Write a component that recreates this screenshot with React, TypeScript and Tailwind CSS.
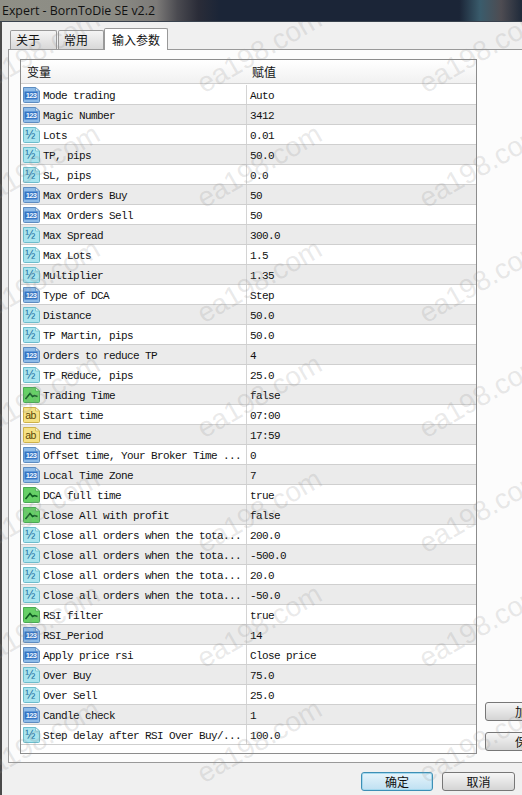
import React from "react";

type Kind = "n" | "d" | "b" | "s";
const rows: [Kind, string, string][] = [
  ["n", "Mode trading", "Auto"],
  ["n", "Magic Number", "3412"],
  ["d", "Lots", "0.01"],
  ["d", "TP, pips", "50.0"],
  ["d", "SL, pips", "0.0"],
  ["n", "Max Orders Buy", "50"],
  ["n", "Max Orders Sell", "50"],
  ["d", "Max Spread", "300.0"],
  ["d", "Max Lots", "1.5"],
  ["d", "Multiplier", "1.35"],
  ["n", "Type of DCA", "Step"],
  ["d", "Distance", "50.0"],
  ["d", "TP Martin, pips", "50.0"],
  ["n", "Orders to reduce TP", "4"],
  ["d", "TP Reduce, pips", "25.0"],
  ["b", "Trading Time", "false"],
  ["s", "Start time", "07:00"],
  ["s", "End time", "17:59"],
  ["n", "Offset time, Your Broker Time ...", "0"],
  ["n", "Local Time Zone", "7"],
  ["b", "DCA full time", "true"],
  ["b", "Close All with profit", "false"],
  ["d", "Close all orders when the tota...", "200.0"],
  ["d", "Close all orders when the tota...", "-500.0"],
  ["d", "Close all orders when the tota...", "20.0"],
  ["d", "Close all orders when the tota...", "-50.0"],
  ["b", "RSI filter", "true"],
  ["n", "RSI_Period", "14"],
  ["n", "Apply price rsi", "Close price"],
  ["d", "Over Buy", "75.0"],
  ["d", "Over Sell", "25.0"],
  ["n", "Candle check", "1"],
  ["d", "Step delay after RSI Over Buy/...", "100.0"],
];

const palette: Record<Kind, { fill: string; edge: string; ear: string }> = {
  n: { fill: "#8dbbe8", edge: "#5c8cc0", ear: "#dcebf9" },
  d: { fill: "#a8e4ee", edge: "#6cbccc", ear: "#e6f8fb" },
  b: { fill: "#66d066", edge: "#4aa855", ear: "#d3f2d3" },
  s: { fill: "#f5e184", edge: "#cdb24a", ear: "#fcf5cf" },
};

function TypeIcon({ kind }: { kind: Kind }) {
  const c = palette[kind];
  return (
    <svg width="17" height="17" viewBox="0 0 17 17" className="shrink-0">
      <path d="M0.5 1.5h12l4 3.5v10.5a1 1 0 0 1-1 1h-14a1 1 0 0 1-1-1z" fill={c.fill} stroke={c.edge} />
      <path d="M12.5 1.5v3.5h4z" fill={c.ear} stroke={c.edge} strokeWidth="0.7" />
      {kind === "n" && (
        <>
          <rect x="1.5" y="5.5" width="13" height="8" fill="#3474c4" />
          <text x="8" y="12.2" textAnchor="middle" fontSize="7.5" fontWeight="700" fill="#eef6ff" fontFamily="Liberation Sans, sans-serif">123</text>
        </>
      )}
      {kind === "d" && (
        <text x="7" y="13" textAnchor="middle" fontSize="12" fill="#1c6ea0" fontFamily="Liberation Sans, sans-serif">½</text>
      )}
      {kind === "b" && <path d="M2.5 13l4.5-5.5 2.5 3 2-1 3 1" fill="none" stroke="#0d5a20" strokeWidth="1.5" />}
      {kind === "s" && (
        <text x="7.5" y="13" textAnchor="middle" fontSize="10.5" fill="#5c4a0a" fontFamily="Liberation Sans, sans-serif">ab</text>
      )}
    </svg>
  );
}

const marks: { x: number; y: number }[] = [];
for (let col = 0; col < 3; col++) {
  for (let r = 0; r < 8; r++) {
    marks.push({ x: -32 + col * 222, y: -100 + r * 115 });
  }
}

const cjk = { fontFamily: '"Noto Sans CJK SC", sans-serif' };

function Btn({ children, className }: { children: React.ReactNode; className: string }) {
  return (
    <div
      className={`flex items-center justify-center rounded-[3px] border text-[12px] text-[#111] ${className}`}
      style={cjk}
    >
      {children}
    </div>
  );
}

export default function App() {
  return (
    <div className="relative h-[795px] w-[522px] overflow-hidden bg-[#f0f0f0] flex flex-col">
      <div className="h-[21px] shrink-0 bg-[linear-gradient(90deg,#8f8f86_0%,#8b8b84_22%,#7c7a78_30%,#4a4a50_34%,#2a2c38_38%,#1b2537_42%,#1b2537_88%,#3a5c6c_92%,#4e4c52_96%,#1f2a3a_100%)] pl-[2px] pt-[1px] text-[12.4px] leading-[19px] text-[#111] [font-family:'Open_Sans',sans-serif]">
        Expert - BornToDie SE v2.2
      </div>
      <div className="h-[1px] shrink-0 bg-[#39424e]" />
      <div className="flex min-h-0 flex-1 flex-col border-l-[2px] border-l-[#4a4a4a] bg-[#f0f0f0] pl-[6px]">
        <div className="flex h-[27px] shrink-0 items-end pl-[2px]" style={cjk}>
          <div className="flex h-[19px] w-[47px] items-center rounded-t-[2px] border border-b-0 border-[#999] bg-[linear-gradient(#f4f4f4,#d8d8d8)] pl-[5px] text-[12px] text-[#111]">关于</div>
          <div className="ml-[1px] flex h-[19px] w-[46px] items-center rounded-t-[2px] border border-b-0 border-[#999] bg-[linear-gradient(#f4f4f4,#d8d8d8)] pl-[5px] text-[12px] text-[#111]">常用</div>
          <div className="relative z-10 -mb-[1px] flex h-[22px] w-[64px] items-center justify-center rounded-t-[2px] border border-b-0 border-[#999] bg-white text-[12px] text-[#111]">输入参数</div>
        </div>
        <div className="h-[714px] shrink-0 border-t border-b border-l border-[#999] bg-[#fcfcfc] pl-[11px] pt-[9px]">
          <div className="h-[695px] w-[457px] border border-[#8c8c8c] bg-white">
            <div className="mb-[1px] flex h-[24px] border-b border-[#d0d0d0] bg-[linear-gradient(#ffffff,#f1f1f1)] text-[12px] text-[#111]" style={cjk}>
              <div className="flex w-[226px] items-center border-r border-transparent pl-[6px]">变量</div>
              <div className="flex items-center pl-[5px]">赋值</div>
            </div>
            {rows.map(([kind, name, value], i) => (
              <div
                key={i}
                className={`flex h-[20px] items-center border-b border-[#cfcfcf] text-[11px] tracking-[-0.6px] text-[#111] [font-family:'Liberation_Mono',monospace] ${i % 2 ? "bg-[#ebebeb]" : "bg-white"}`}
              >
                <div className="flex h-full w-[226px] shrink-0 items-center border-r border-[#d4d4d4] pl-[2px]">
                  <TypeIcon kind={kind} />
                  <span className="ml-[3px] whitespace-pre pt-[3px]">{name}</span>
                </div>
                <span className="pl-[3px] whitespace-pre pt-[3px]">{value}</span>
              </div>
            ))}
          </div>
        </div>
        <div className="relative flex-1">
          <div className="absolute right-[7px] top-[9px] flex gap-[9px]">
            <Btn className="h-[19px] w-[72px] border-[#3d8fb5] bg-[linear-gradient(#e6f4fb,#bfe0f2)] shadow-[inset_0_0_0_1px_#a4d8ee]">确定</Btn>
            <Btn className="h-[19px] w-[73px] border-[#777] bg-[linear-gradient(#f6f6f6,#d4d4d4)]">取消</Btn>
          </div>
        </div>
      </div>
      <Btn className="absolute left-[485px] top-[702px] h-[19px] w-[84px] border-[#777] bg-[linear-gradient(#f6f6f6,#d4d4d4)]">加载</Btn>
      <Btn className="absolute left-[485px] top-[732px] h-[19px] w-[84px] border-[#777] bg-[linear-gradient(#f6f6f6,#d4d4d4)]">保存</Btn>
      <div className="pointer-events-none absolute inset-x-0 bottom-0 top-[22px] z-20 overflow-hidden">
        {marks.map((m, i) => (
          <div
            key={i}
            className="absolute w-[140px] -rotate-[30deg] whitespace-nowrap text-[28px] leading-none text-[#8f8f8f]/20 [font-family:'Liberation_Sans',sans-serif]"
            style={{ left: m.x, top: m.y }}
          >
            ea198.com
          </div>
        ))}
      </div>
    </div>
  );
}
